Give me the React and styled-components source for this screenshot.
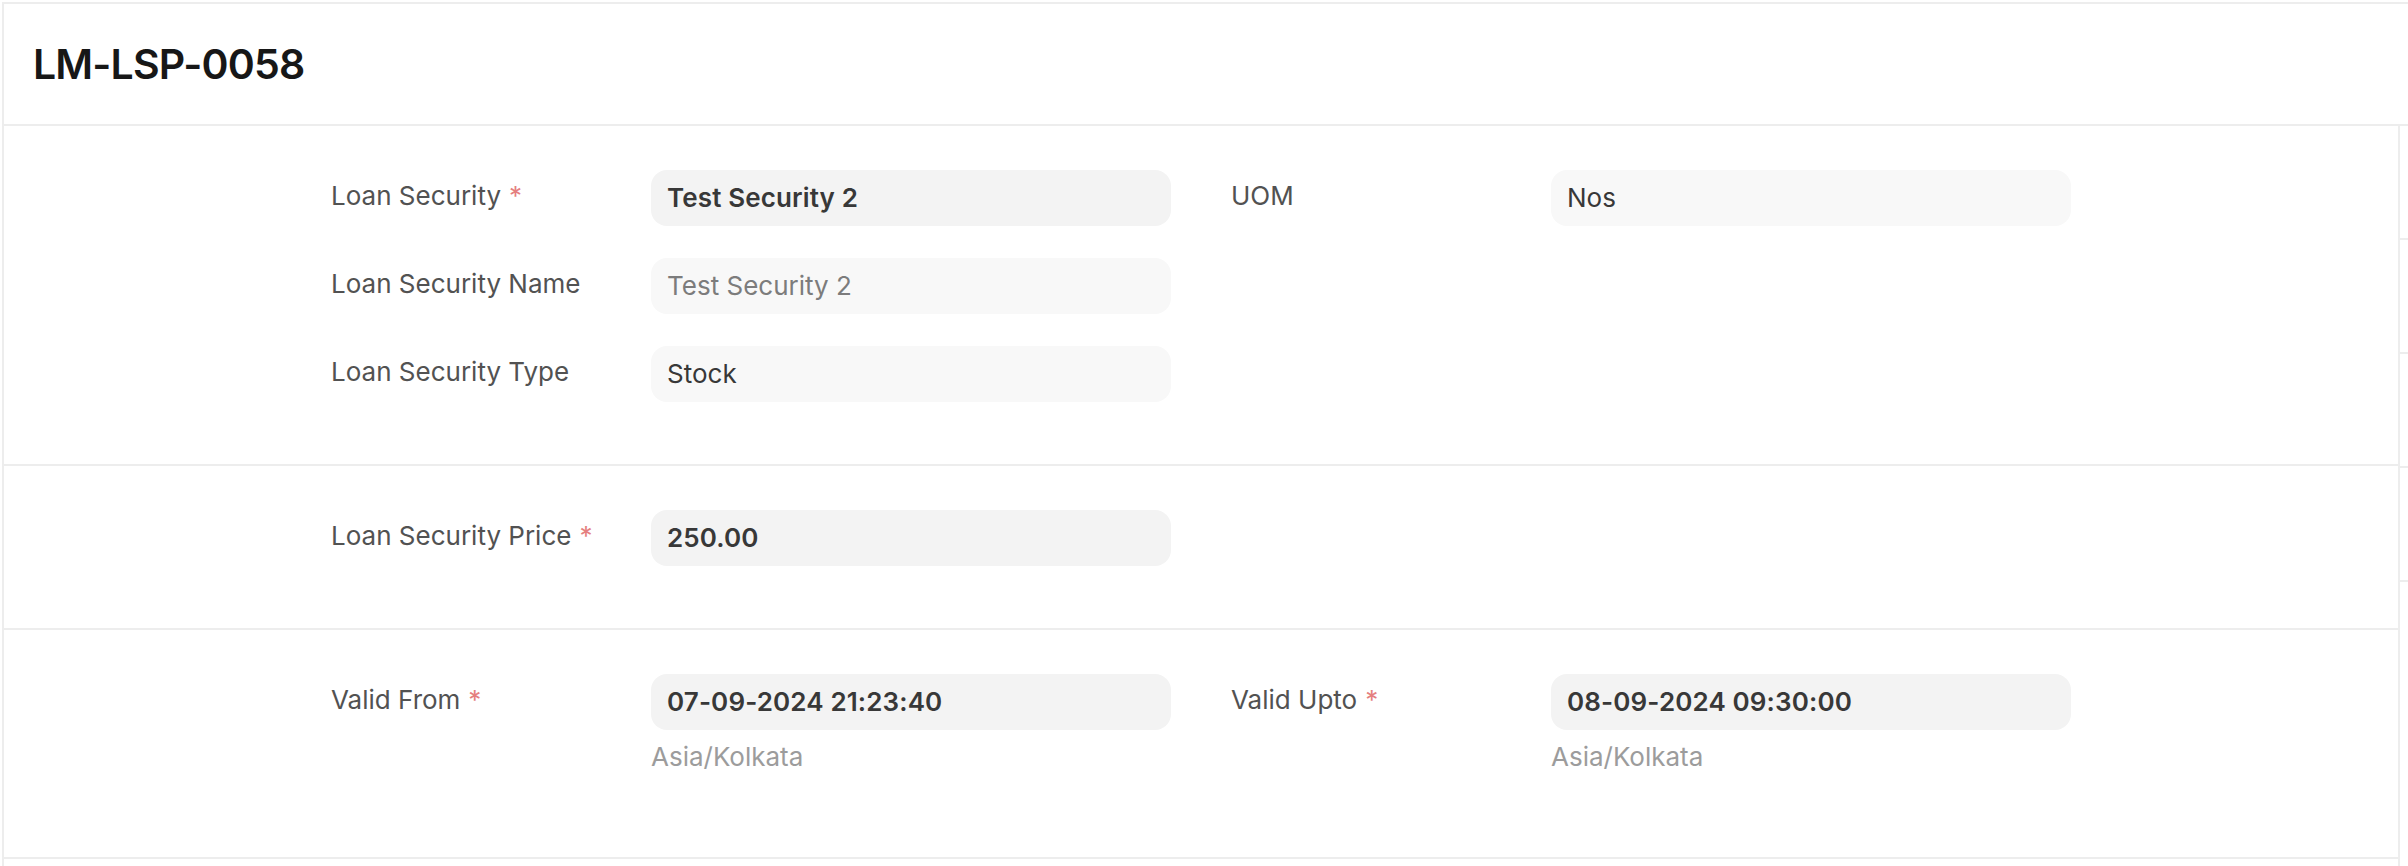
import styled, { createGlobalStyle } from "styled-components";

const GlobalStyle = createGlobalStyle`
  html, body {
    margin: 0;
    padding: 0;
    background: #ffffff;
  }
  body {
    font-family: Inter, "Noto Sans", sans-serif;
    color: #171717;
    -webkit-font-smoothing: antialiased;
  }
`;

const Page = styled.div`
  display: flex;
  flex-direction: column;
  box-sizing: border-box;
  min-height: calc(100vh - 2px);
  margin: 2px 0 0 2px;
  border-top: 2px solid #ededed;
  border-left: 2px solid #ededed;
`;

const Header = styled.div`
  display: flex;
  align-items: center;
  height: 120px;
  padding-left: 29px;
  border-bottom: 2px solid #ededed;
`;

const Title = styled.h1`
  margin: 0;
  font-size: 41px;
  line-height: 50px;
  font-weight: 600;
  letter-spacing: -0.02em;
  color: #171717;
`;

const Body = styled.div`
  display: flex;
  flex: 1;
`;

const FormPanel = styled.div`
  flex: 1;
  border-right: 2px solid #ededed;
`;

const SideColumn = styled.div`
  width: 8px;
`;

const SideRow = styled.div`
  height: 112px;
  border-bottom: 2px solid #ededed;
`;

const Section = styled.div`
  padding: 44px 0 30px;
  border-bottom: 2px solid #ededed;
`;

const SectionGrid = styled.div`
  display: grid;
  grid-template-columns: 1fr 1fr;
  column-gap: 60px;
  max-width: 1740px;
  margin: 0 auto;
`;

const Column = styled.div`
  display: flex;
  flex-direction: column;
`;

const FieldRow = styled.div`
  display: grid;
  grid-template-columns: 320px 1fr;
  margin-bottom: 32px;
`;

const Label = styled.div`
  margin-top: 10px;
  font-size: 26px;
  line-height: 32px;
  color: #525252;
`;

const Reqd = styled.span`
  margin-left: 8px;
  color: #e57f7f;
`;

const Control = styled.div`
  display: flex;
  flex-direction: column;
`;

const InputBox = styled.div`
  box-sizing: border-box;
  height: 56px;
  padding: 0 16px;
  border-radius: 16px;
  font-size: 26px;
  line-height: 56px;
  background: ${(props) => (props.$readOnly ? "#f8f8f8" : "#f3f3f3")};
  color: ${(props) => (props.$muted ? "#7c7c7c" : "#383838")};
  font-weight: ${(props) => (props.$bold ? 600 : 400)};
  letter-spacing: ${(props) => (props.$bold ? "0.005em" : "0")};
  white-space: nowrap;
  overflow: hidden;
`;

const HelpText = styled.div`
  margin: 9px 0 20px;
  font-size: 26px;
  line-height: 36px;
  color: #9c9c9c;
`;

const Field = ({ label, reqd, value, bold, readOnly, muted, help }) => {
  return (
    <FieldRow>
      <Label>
        {label}
        {reqd && <Reqd>*</Reqd>}
      </Label>
      <Control>
        <InputBox $bold={bold} $readOnly={readOnly} $muted={muted}>
          {value}
        </InputBox>
        {help && <HelpText>{help}</HelpText>}
      </Control>
    </FieldRow>
  );
};

export default function App() {
  return (
    <>
      <GlobalStyle />
      <Page>
        <Header>
          <Title>LM-LSP-0058</Title>
        </Header>
        <Body>
          <FormPanel>
            <Section>
              <SectionGrid>
                <Column>
                  <Field label="Loan Security" reqd value="Test Security 2" bold />
                  <Field label="Loan Security Name" value="Test Security 2" readOnly muted />
                  <Field label="Loan Security Type" value="Stock" readOnly />
                </Column>
                <Column>
                  <Field label="UOM" value="Nos" readOnly />
                </Column>
              </SectionGrid>
            </Section>
            <Section>
              <SectionGrid>
                <Column>
                  <Field label="Loan Security Price" reqd value="250.00" bold />
                </Column>
                <Column />
              </SectionGrid>
            </Section>
            <Section>
              <SectionGrid>
                <Column>
                  <Field
                    label="Valid From"
                    reqd
                    value="07-09-2024 21:23:40"
                    bold
                    help="Asia/Kolkata"
                  />
                </Column>
                <Column>
                  <Field
                    label="Valid Upto"
                    reqd
                    value="08-09-2024 09:30:00"
                    bold
                    help="Asia/Kolkata"
                  />
                </Column>
              </SectionGrid>
            </Section>
          </FormPanel>
          <SideColumn>
            <SideRow />
            <SideRow />
            <SideRow />
            <SideRow />
          </SideColumn>
        </Body>
      </Page>
    </>
  );
}
